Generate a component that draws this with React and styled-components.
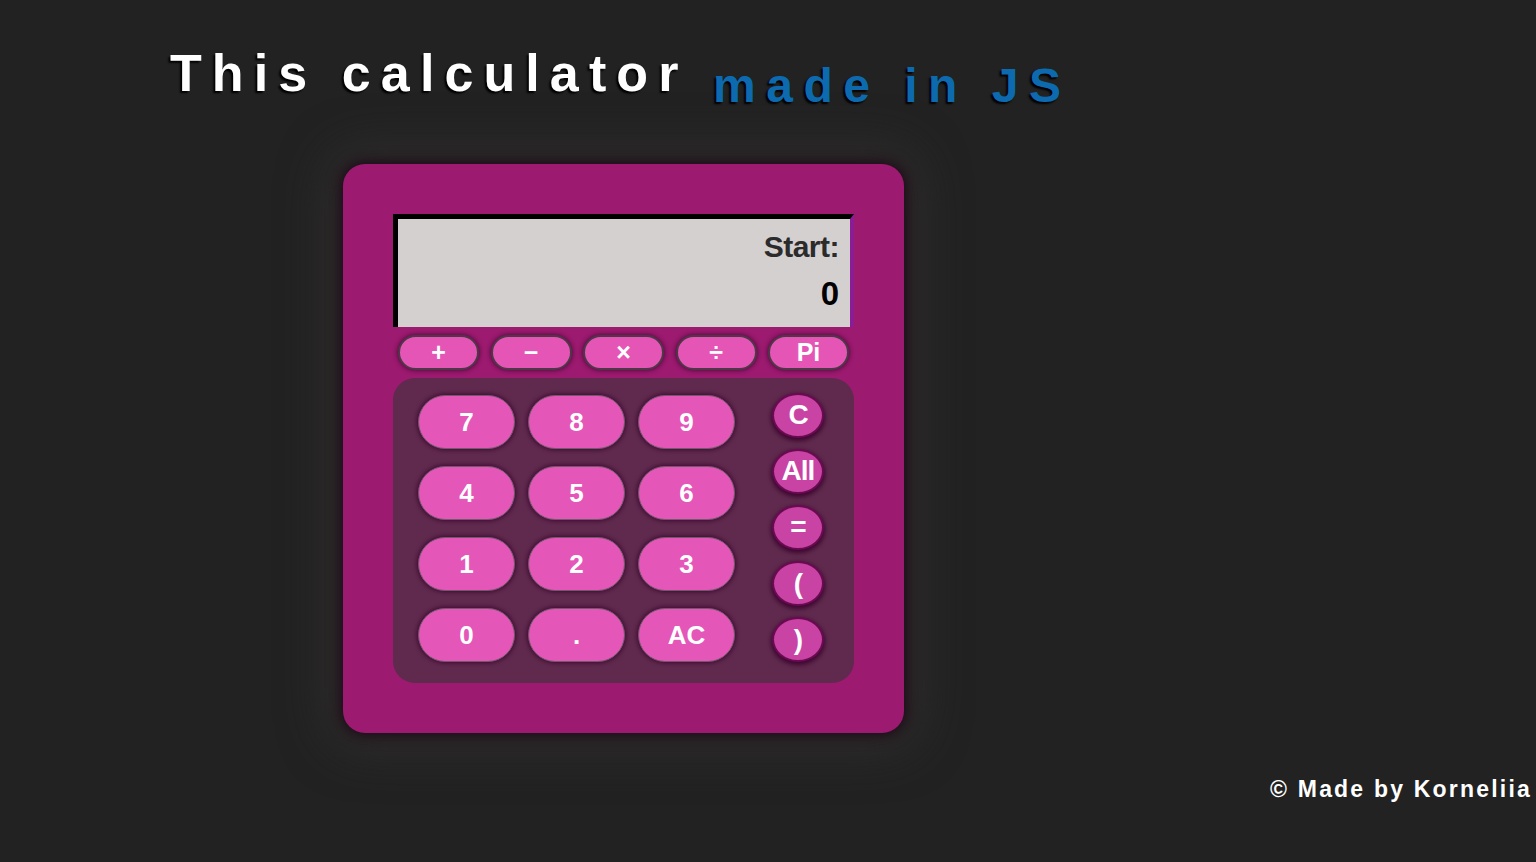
import React from "react";
import styled, { createGlobalStyle } from "styled-components";

const GlobalStyle = createGlobalStyle`
  html, body {
    margin: 0;
    padding: 0;
    background: #222222;
    font-family: "Liberation Sans", Arial, sans-serif;
  }
`;

const Page = styled.div`
  min-height: 862px;
  background: #222222;
  overflow: hidden;
`;

const Header = styled.h1`
  box-sizing: border-box;
  height: 164px;
  margin: 0;
  padding: 43px 0 0 170px;
  font-size: 52px;
  line-height: 60px;
  font-weight: 700;
  letter-spacing: 10.1px;
  color: #ffffff;
  text-shadow: -2px 2px 2px #000;
  white-space: nowrap;
`;

const Accent = styled.span`
  font-size: 48px;
  letter-spacing: 10.5px;
  color: #0e6aaf;
  vertical-align: -11px;
  line-height: 0;
`;

const Calculator = styled.div`
  box-sizing: border-box;
  width: 561px;
  height: 569px;
  margin-left: 343px;
  padding: 50px;
  border-radius: 22px;
  background: #9c1a6f;
  box-shadow: 0 0 14px 3px #1c0a17, 0 0 45px 18px rgba(58, 52, 52, 0.55);
`;

const Screen = styled.div`
  box-sizing: border-box;
  height: 113px;
  padding: 12px 11px 0 0;
  background: #d5d0d0;
  border-style: solid;
  border-width: 5px 4px 0 5px;
  border-color: #000 #8b1c93 transparent #000;
  text-align: right;
  font-weight: 700;
`;

const Label = styled.div`
  font-size: 30px;
  line-height: 32px;
  color: #2b2b2b;
  letter-spacing: -0.5px;
`;

const Value = styled.div`
  margin-top: 13px;
  font-size: 33px;
  line-height: 36px;
  color: #000;
`;

const OpRow = styled.div`
  display: flex;
  justify-content: space-between;
  padding: 0 5px 0 5px;
  margin: 8px 0;
`;

const OpButton = styled.button`
  width: 81px;
  height: 35px;
  padding: 0;
  border: 2px solid #4e3848;
  border-radius: 18px;
  background: #e455b6;
  color: #fff;
  font-family: inherit;
  font-size: 25px;
  font-weight: 700;
  line-height: 1;
  box-shadow: 0 0 4px 1px #5a0c45;
`;

const Keypad = styled.div`
  box-sizing: border-box;
  height: 305px;
  display: flex;
  gap: 37px;
  padding: 17px 0 0 25px;
  border-radius: 22px;
  background: #5f2a4d;
`;

const Digits = styled.div`
  display: grid;
  grid-template-columns: repeat(3, 97px);
  grid-auto-rows: 54px;
  column-gap: 13px;
  row-gap: 17px;
`;

const DigitButton = styled.button`
  padding: 0;
  border: 1px solid #6e5a68;
  border-radius: 27px;
  background: #e456b8;
  color: #fff;
  font-family: inherit;
  font-size: 26px;
  font-weight: 700;
  box-shadow: 0 0 4px 1px #3e0833;
`;

const Side = styled.div`
  display: flex;
  flex-direction: column;
  gap: 11px;
  margin-top: -2px;
`;

const RoundButton = styled.button`
  width: 52px;
  height: 45px;
  padding: 0 0 ${(p) => (p.$low ? "0" : "2px")};
  border: 2px solid #6a0b52;
  border-radius: 50%;
  background: #c843a3;
  color: #fff;
  font-family: inherit;
  font-size: 28px;
  font-weight: 700;
  line-height: 1;
  letter-spacing: -1px;
  box-shadow: 0 2px 4px 1px #3c0630;
`;

const Footer = styled.footer`
  margin-top: 43px;
  padding-right: 4px;
  text-align: right;
  color: #fff;
  font-size: 23px;
  font-weight: 700;
  letter-spacing: 2.2px;
`;

const ops = ["+", "−", "×", "÷", "Pi"];
const digits = ["7", "8", "9", "4", "5", "6", "1", "2", "3", "0", ".", "AC"];
const side = ["C", "All", "=", "(", ")"];

export default function App() {
  return (
    <Page>
      <GlobalStyle />
      <Header>
        This calculator <Accent>made in JS</Accent>
      </Header>
      <Calculator>
        <Screen>
          <Label>Start:</Label>
          <Value>0</Value>
        </Screen>
        <OpRow>
          {ops.map((o) => (
            <OpButton key={o}>{o}</OpButton>
          ))}
        </OpRow>
        <Keypad>
          <Digits>
            {digits.map((d) => (
              <DigitButton key={d}>{d}</DigitButton>
            ))}
          </Digits>
          <Side>
            {side.map((s) => (
              <RoundButton key={s} $low={s === "(" || s === ")"}>
                {s}
              </RoundButton>
            ))}
          </Side>
        </Keypad>
      </Calculator>
      <Footer>© Made by Korneliia</Footer>
    </Page>
  );
}
